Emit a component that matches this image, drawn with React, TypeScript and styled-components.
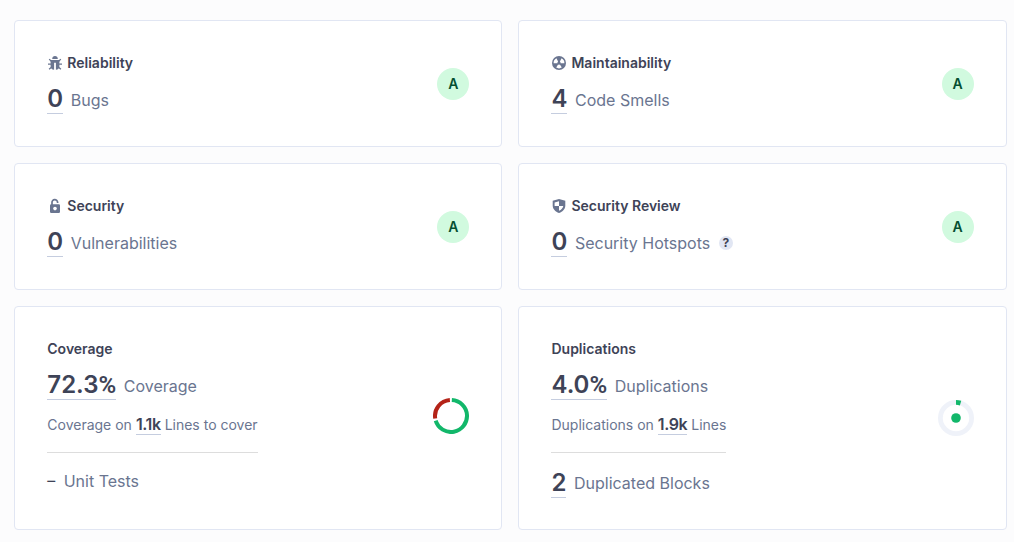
import React from 'react';
import styled, { createGlobalStyle } from 'styled-components';

const GlobalStyle = createGlobalStyle`
  *, *::before, *::after { box-sizing: border-box; }
  body {
    margin: 0;
    background: rgb(252, 252, 253);
    color: rgb(62, 67, 87);
    font-family: Inter, "Liberation Sans", sans-serif;
    font-size: 14px;
    line-height: 20px;
  }
`;

const Grid = styled.main`
  display: grid;
  grid-template-columns: 1fr 1fr;
  grid-template-rows: 127px 127px 224px;
  gap: 16px;
  padding: 20px 7.4px 12px 14.3px;
`;

const Card = styled.section`
  display: flex;
  align-items: center;
  justify-content: space-between;
  padding: 32px;
  background: #fff;
  border: 1px solid rgb(225, 230, 243);
  border-radius: 4px;
`;

const Info = styled.div`
  display: flex;
  flex-direction: column;
  align-items: flex-start;
  align-self: flex-start;
`;

const Title = styled.h2`
  display: flex;
  align-items: center;
  gap: 4px;
  height: 20px;
  margin: 0 0 8px;
  font-size: 14px;
  font-weight: 600;
  line-height: 20px;
`;

const Icon = styled.svg`
  display: block;
  flex: none;
  width: 16px;
  height: 16px;
  color: rgb(106, 117, 144);
`;

const Measure = styled.div<{ $gap?: number }>`
  display: flex;
  align-items: center;
  gap: ${({ $gap = 7.6 }) => $gap}px;
  height: 33px;
`;

const Value = styled.a`
  height: 33px;
  border-bottom: 1px solid rgb(197, 205, 223);
  font-size: 24px;
  font-weight: 600;
  line-height: 35px;
`;

const Percent = styled.span`
  font-family: Roboto, "Liberation Sans", sans-serif;
`;

const Label = styled.span<{ $drop?: number }>`
  padding-top: ${({ $drop = 5 }) => $drop}px;
  color: rgb(106, 117, 144);
  font-size: 16px;
  line-height: 24px;
`;

const Help = styled.span`
  display: flex;
  align-items: center;
  justify-content: center;
  width: 14px;
  height: 14px;
  margin: 5px 0 0 1px;
  border-radius: 50%;
  background: rgb(225, 230, 243);
  font-size: 12px;
  font-weight: 700;
  line-height: 14px;
`;

const Rating = styled.span`
  display: flex;
  align-items: center;
  justify-content: center;
  width: 32px;
  height: 32px;
  border-radius: 50%;
  background: rgb(209, 250, 223);
  color: rgb(5, 79, 49);
  font-size: 14px;
  font-weight: 600;
`;

const Detail = styled.div`
  display: flex;
  align-items: flex-start;
  gap: 4px;
  height: 53px;
  padding-top: 15px;
  border-bottom: 1px solid rgb(221, 221, 221);
  color: rgb(106, 117, 144);
  font-size: 14px;
  line-height: 20px;
`;

const DetailValue = styled.a`
  height: 20px;
  border-bottom: 1px solid rgb(197, 205, 223);
  color: rgb(62, 67, 87);
  font-size: 16px;
  font-weight: 600;
  letter-spacing: -0.4px;
  line-height: 19px;
`;

const Secondary = styled.div<{ $compact?: boolean }>`
  display: flex;
  margin-top: ${({ $compact }) => ($compact ? 11 : 12)}px;
`;

const Dash = styled.span`
  padding-bottom: 1px;
  font-size: 16px;
  font-weight: 400;
  line-height: 24px;
`;

const Donut = styled.svg<{ $lift?: boolean }>`
  display: block;
  width: 36px;
  height: 36px;
  margin-bottom: ${({ $lift }) => ($lift ? 4 : 0)}px;
`;

const BugIcon = () => (
  <Icon viewBox="0 0 16 16" fill="none" stroke="currentColor">
    <path d="M5.2 4C5.2 2.2 6.3 1 8 1s2.8 1.2 2.8 3z" fill="currentColor" stroke="none" />
    <path
      d="M3.6 5h8.8v6.2c0 1.9-1.2 3.3-3.5 3.6V7.8H7.1v7c-2.3-.3-3.5-1.7-3.5-3.6z"
      fill="currentColor"
      stroke="none"
    />
    <path d="M4.3 6.2 2.2 4.1M11.7 6.2l2.1-2.1M4 9.2H1M12 9.2h3M4.4 12.2l-2.3 2.1M11.6 12.2l2.3 2.1" strokeWidth="1.3" />
  </Icon>
);

const SmellIcon = () => (
  <Icon viewBox="0 0 16 16">
    <circle cx="8" cy="8" r="7" fill="currentColor" />
    <path
      d="M6.4 8.2H2.6A5.4 5.4 0 0 1 5.4 3.3L7.1 6.6A1.8 1.8 0 0 0 6.4 8.2ZM9.6 8.2h3.8a5.4 5.4 0 0 0-2.8-4.9L8.9 6.6A1.8 1.8 0 0 1 9.6 8.2ZM7.1 9.5l-1.9 3.1a5.5 5.5 0 0 0 5.6 0L8.9 9.5a1.8 1.8 0 0 1-1.8 0Z"
      fill="#fff"
    />
  </Icon>
);

const LockIcon = () => (
  <Icon viewBox="0 0 16 16" fill="none">
    <path d="M5 7V4.5a2.8 2.8 0 0 1 5.6-.3V5" stroke="currentColor" strokeWidth="1.7" />
    <rect x="3" y="6.3" width="10" height="8.7" rx="1.2" fill="currentColor" />
    <circle cx="8" cy="10.6" r="1.8" fill="#fff" />
  </Icon>
);

const ShieldIcon = () => (
  <Icon viewBox="0 0 16 16">
    <path d="M8 1 14.3 2.8V7.5c0 3.5-2.5 6.2-6.3 7.5-3.8-1.3-6.3-4-6.3-7.5V2.8Z" fill="currentColor" />
    <path d="M8 3.2V8H3.6V4.4ZM8 8h4.3c-.4 2-1.9 3.8-4.3 4.8Z" fill="#fff" />
  </Icon>
);

/** Point on a circle around (18, 18); the angle starts at 12 o'clock, clockwise. */
const polar = (radius: number, degrees: number) => {
  const a = (degrees * Math.PI) / 180;
  return `${(18 + radius * Math.sin(a)).toFixed(2)} ${(18 - radius * Math.cos(a)).toFixed(2)}`;
};

const arc = (radius: number, from: number, to: number) =>
  `M${polar(radius, from)}A${radius} ${radius} 0 ${to - from > 180 ? 1 : 0} 1 ${polar(radius, to)}`;

const CoverageDonut = () => (
  <Donut $lift viewBox="0 0 36 36" fill="none" strokeWidth="4">
    <path d={arc(16, 3, 253)} stroke="rgb(18, 183, 106)" />
    <path d={arc(16, 261, 356)} stroke="rgb(180, 35, 24)" />
  </Donut>
);

const DuplicationsDonut = () => (
  <Donut viewBox="0 0 36 36" fill="none" strokeWidth="4.8">
    <circle cx="18" cy="18" r="15.6" stroke="rgb(239, 242, 249)" />
    <path d={arc(15.6, 0, 17)} stroke="rgb(18, 183, 106)" />
    <circle cx="18" cy="18" r="4.8" fill="rgb(18, 183, 106)" stroke="none" />
  </Donut>
);

interface RatingCardProps {
  icon: React.ReactNode;
  title: string;
  value: string;
  label: string;
  help?: boolean;
}

const RatingCard = ({ icon, title, value, label, help }: RatingCardProps) => (
  <Card>
    <Info>
      <Title>
        {icon}
        {title}
      </Title>
      <Measure>
        <Value>{value}</Value>
        <Label>{label}</Label>
        {help && <Help>?</Help>}
      </Measure>
    </Info>
    <Rating>A</Rating>
  </Card>
);

export default function App() {
  return (
    <>
      <GlobalStyle />
      <Grid>
        <RatingCard icon={<BugIcon />} title="Reliability" value="0" label="Bugs" />
        <RatingCard icon={<SmellIcon />} title="Maintainability" value="4" label="Code Smells" />
        <RatingCard icon={<LockIcon />} title="Security" value="0" label="Vulnerabilities" />
        <RatingCard icon={<ShieldIcon />} title="Security Review" value="0" label="Security Hotspots" help />
        <Card>
          <Info>
            <Title>Coverage</Title>
            <Measure>
              <Value>
                72.3<Percent>%</Percent>
              </Value>
              <Label>Coverage</Label>
            </Measure>
            <Detail>
              <span>Coverage on</span>
              <DetailValue>1.1k</DetailValue>
              <span>Lines to cover</span>
            </Detail>
            <Secondary $compact>
              <Measure $gap={8.4}>
                <Dash>–</Dash>
                <Label $drop={0}>Unit Tests</Label>
              </Measure>
            </Secondary>
          </Info>
          <CoverageDonut />
        </Card>
        <Card>
          <Info>
            <Title>Duplications</Title>
            <Measure>
              <Value>
                4.0<Percent>%</Percent>
              </Value>
              <Label>Duplications</Label>
            </Measure>
            <Detail>
              <span>Duplications on</span>
              <DetailValue>1.9k</DetailValue>
              <span>Lines</span>
            </Detail>
            <Secondary>
              <Measure>
                <Value>2</Value>
                <Label $drop={3}>Duplicated Blocks</Label>
              </Measure>
            </Secondary>
          </Info>
          <DuplicationsDonut />
        </Card>
      </Grid>
    </>
  );
}
